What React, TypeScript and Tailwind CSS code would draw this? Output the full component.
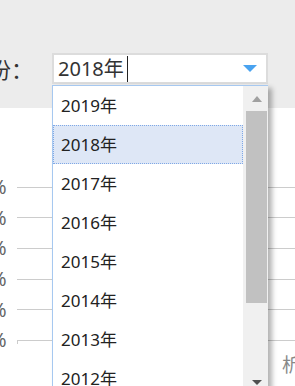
const years = ['2019年', '2018年', '2017年', '2016年', '2015年', '2014年', '2013年', '2012年'];

const App = () => {
  const selected = '2018年';

  return (
    <div
      className="relative w-[295px] h-[386px] overflow-hidden bg-white"
      style={{ fontFamily: '"Noto Sans", "Noto Sans CJK SC", sans-serif' }}
    >
      {/* filter bar */}
      <div className="h-[108px] bg-[#ececec] pt-[53px]">
        <div className="flex items-center h-[31px]">
          <span className="ml-[-11px] w-[63px] text-[22px] leading-none text-[#333]">份：</span>
          <div className="flex items-center w-[216px] h-[31px] border-2 border-[#dcdcdc] bg-white pl-[4px] pr-[9px]">
            <span className="text-[20px] leading-none text-[#333]">{selected}</span>
            <span className="ml-[3px] w-px h-[26px] bg-[#222]" />
            <span className="ml-auto w-0 h-0 border-l-[7.5px] border-r-[7.5px] border-t-[7px] border-l-transparent border-r-transparent border-t-[#4aa3f0]" />
          </div>
        </div>
      </div>

      {/* chart behind */}
      <div className="pt-[64px]">
        {[0, 1, 2, 3, 4, 5].map((i) => (
          <div key={i} className="flex items-center h-[30.6px]">
            <span className="ml-[-10px] w-[27px] text-[20px] leading-none text-[#666]">%</span>
            <div className="relative flex-1 h-px bg-[#cccccc]">
              {i === 5 && <span className="absolute left-0 top-0 w-px h-[4px] bg-[#cccccc]" />}
            </div>
          </div>
        ))}
        <div className="flex justify-end">
          <span className="mr-[-6px] text-[19px] leading-none text-[#888]">析</span>
        </div>
      </div>

      {/* dropdown list */}
      <div className="absolute left-[52px] top-[85px] w-[216px] h-[320px] flex border-l border-t border-[#a6c8f0] bg-white shadow-[4px_3px_5px_rgba(0,0,0,0.3)]">
        <div className="flex-1">
          {years.map((y) => (
            <div
              key={y}
              className={
                y === selected
                  ? 'h-[39px] flex items-center pl-[7px] border border-dotted border-[#7fa8e6] bg-[#dee7f6] text-[17px] text-[#222]'
                  : 'h-[39px] flex items-center pl-[8px] text-[17px] text-[#222]'
              }
            >
              {y}
            </div>
          ))}
        </div>
        <div className="w-[25px] bg-[#f0f0f0] flex flex-col items-end pr-px">
          <div className="w-[21px] h-[25px] flex items-center justify-center">
            <span className="w-0 h-0 border-l-[5.5px] border-r-[5.5px] border-b-[6px] border-l-transparent border-r-transparent border-b-[#a0a0a0]" />
          </div>
          <div className="w-[21px] h-[192px] bg-[#c1c1c1]" />
          <div className="w-[21px] h-[76px]" />
          <div className="w-[21px] h-[6px] flex items-center justify-center">
            <span className="w-0 h-0 border-l-[5px] border-r-[5px] border-t-[5px] border-l-transparent border-r-transparent border-t-[#505050]" />
          </div>
        </div>
      </div>
    </div>
  );
};

export default App;
